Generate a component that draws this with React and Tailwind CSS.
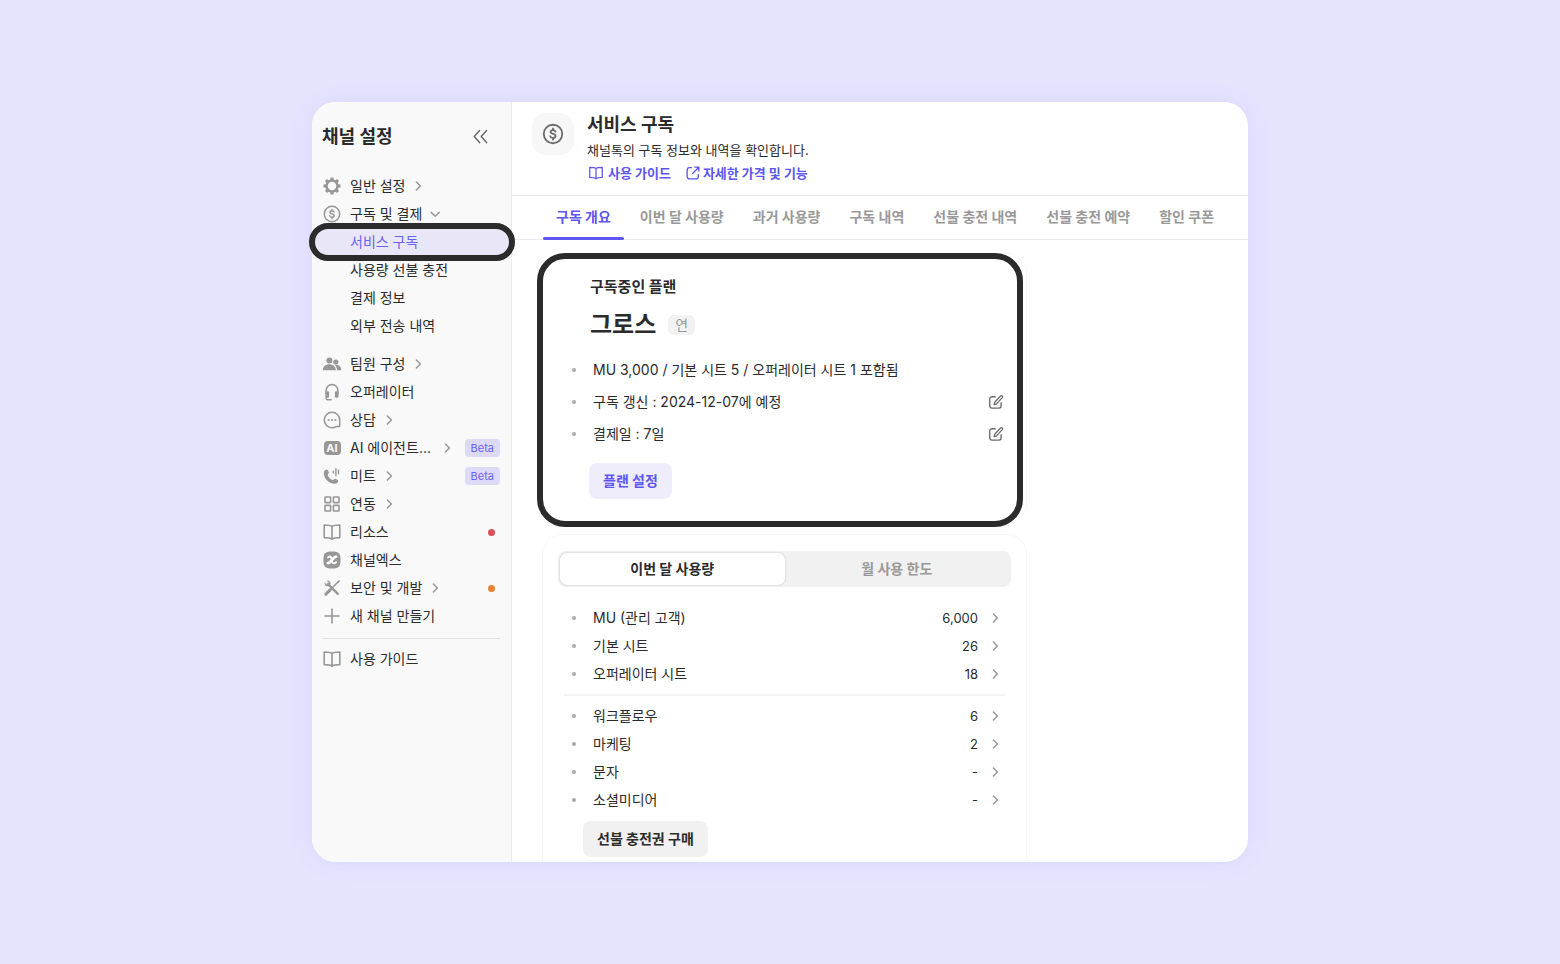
import React from "react";

const GRAY = "#979797";

function Svg({ size = 20, children, className = "shrink-0" }) {
  return (
    <svg width={size} height={size} viewBox="0 0 20 20" fill="none" className={className} aria-hidden="true">
      {children}
    </svg>
  );
}

function Gear() {
  return (
    <Svg>
      <circle cx="10" cy="10" r="5.5" stroke={GRAY} strokeWidth="2.4" />
      {[0, 45, 90, 135, 180, 225, 270, 315].map((a) => (
        <path key={a} d="M8.2 4.2 8.6 1.5h2.8l.4 2.7z" fill={GRAY} transform={`rotate(${a} 10 10)`} />
      ))}
    </Svg>
  );
}

function Dollar({ color = GRAY, size = 20, width = 1.5 }) {
  return (
    <Svg size={size}>
      <circle cx="10" cy="10" r="7.7" stroke={color} strokeWidth={width} />
      <path
        d="M12.1 8.1c-.3-.8-1-1.3-2.1-1.3-1.2 0-2 .6-2 1.5 0 2.2 4.2 1.1 4.2 3.4 0 1-.9 1.6-2.2 1.6s-2-.6-2.3-1.5M10 5.4v1.4M10 13.3v1.4"
        stroke={color}
        strokeWidth={width}
        strokeLinecap="round"
      />
    </Svg>
  );
}

function People() {
  return (
    <Svg>
      <circle cx="7.4" cy="6.4" r="3" fill={GRAY} />
      <path d="M.8 16.2c0-3.8 2.8-6 6.500-6s6.500 2.200 6.500 6z" fill={GRAY} />
      <circle cx="13.8" cy="8" r="2.6" fill={GRAY} />
      <path d="M15 16.2c0-2-.7-3.700-2-5 3.300-.6 6.400 1.200 6.400 5z" fill={GRAY} />
    </Svg>
  );
}

function Headset() {
  return (
    <Svg>
      <path d="M4.1 12V8.5a5.9 5.9 0 0 1 11.8 0V12" stroke={GRAY} strokeWidth="1.5" />
      <rect x="3.5" y="9.2" width="3.6" height="6.6" rx="1.2" fill={GRAY} />
      <rect x="12.9" y="9.2" width="3.6" height="6.6" rx="1.2" fill={GRAY} />
      <path d="M4.2 13.5v2.7c0 .9.6 1.5 1.5 1.5h3.6" stroke={GRAY} strokeWidth="1.4" strokeLinecap="round" />
    </Svg>
  );
}

function Chat() {
  return (
    <Svg>
      <path
        d="M10 2.3a7.7 7.7 0 1 0 4 14.3h3c.4 0 .7-.3.7-.7v-5.9A7.7 7.7 0 0 0 10 2.3z"
        stroke={GRAY}
        strokeWidth="1.5"
        strokeLinejoin="round"
      />
      <circle cx="6.6" cy="10" r="1.1" fill={GRAY} />
      <circle cx="10" cy="10" r="1.1" fill={GRAY} />
      <circle cx="13.4" cy="10" r="1.1" fill={GRAY} />
    </Svg>
  );
}

function AiBadge() {
  return (
    <span className="flex w-5 shrink-0 justify-center" aria-hidden="true">
      <span className="flex h-[14px] w-[17px] items-center justify-center rounded-[4px] bg-[#979797] text-[11px] leading-[14px] font-bold text-[#f9f9f9]">
        AI
      </span>
    </span>
  );
}

function Phone() {
  return (
    <Svg>
      <path
        d="M2.400 5C3 4 4 3.300 4.800 3.400c.8.100 2.100 2.300 2.200 3.100.1.900-1.400 1.600-1.300 2.400.3 1.900 3.200 4.800 5.100 5.100.8.100 1.500-1.400 2.400-1.300.8.100 3 1.400 3.100 2.200.1.800-.6 1.800-1.600 2.400C8.600 20.200-.6 11 2.400 5z"
        fill={GRAY}
      />
      <path d="M11.300 5.100v2M13.900 2.600v7M16.500 4.100v3.600" stroke={GRAY} strokeWidth="1.400" strokeLinecap="round" />
    </Svg>
  );
}

function Grid() {
  return (
    <Svg>
      {[[3, 3], [11.4, 3], [3, 11.4], [11.4, 11.4]].map(([x, y]) => (
        <rect key={`${x}-${y}`} x={x} y={y} width="5.6" height="5.6" rx="0.6" stroke={GRAY} strokeWidth="1.6" />
      ))}
    </Svg>
  );
}

function Book({ color = GRAY, size = 20, width = 1.6 }) {
  return (
    <Svg size={size}>
      <path
        d="M10 4.4C8.8 3.3 7.5 3 2.2 3v12.6c5 0 6.600.3 7.800 1.700 1.200-1.400 2.800-1.700 7.800-1.700V3c-5.300 0-6.600.3-7.800 1.400zM10 4.400v12.900"
        stroke={color}
        strokeWidth={width}
        strokeLinejoin="round"
      />
    </Svg>
  );
}

function ChannelX() {
  return (
    <Svg>
      <rect x="1.5" y="1.5" width="17" height="17" rx="6" fill={GRAY} />
      <path d="M14.200 6.700C11.200 6.500 9 13.200 5.800 13.200" stroke="#f9f9f9" strokeWidth="2.800" strokeLinecap="round" />
      <path
        d="M6 7.500c1.300-1.500 2.900-1.300 3.300.3l1 4.300c.4 1.600 2.300 1.600 3.900.2"
        stroke="#f9f9f9"
        strokeWidth="1.900"
        strokeLinecap="round"
      />
    </Svg>
  );
}

function Tools() {
  return (
    <Svg>
      <path d="M6 6l9.8 9.8" stroke={GRAY} strokeWidth="2.4" strokeLinecap="round" />
      <path d="M2.6 4.4 4.6 6.4 6.3 6 6.6 4.3 4.7 2.5C7.2 1.9 9 3.8 8.5 6.3L6.8 8.2C4.3 8.9 2 6.9 2.6 4.4z" fill={GRAY} />
      <path d="M16.8 3.2 11 9" stroke={GRAY} strokeWidth="1.5" strokeLinecap="round" />
      <path d="M15 3.4 17.3 2.3 17.9 2.9 16.7 5.1z" fill={GRAY} />
      <path d="M8.4 11.6 3.8 16.3" stroke={GRAY} strokeWidth="3" strokeLinecap="round" />
    </Svg>
  );
}

function Plus() {
  return (
    <Svg>
      <path d="M10 3v14M3 10h14" stroke={GRAY} strokeWidth="1.6" strokeLinecap="round" />
    </Svg>
  );
}

function Chevron({ down = false }) {
  return (
    <svg width="14" height="14" viewBox="0 0 14 14" fill="none" className="shrink-0" aria-hidden="true">
      <path
        d={down ? "M3.2 5.400 7.200 9.200l4-3.800" : "M5.400 3 9.400 7l-4 4"}
        stroke={GRAY}
        strokeWidth="1.5"
        strokeLinecap="round"
        strokeLinejoin="round"
      />
    </svg>
  );
}

function Collapse() {
  return (
    <Svg>
      <path d="M9.6 3.6 4.2 9.6l5.4 6M16.6 3.6l-5.4 6 5.4 6" stroke="#6b6b6b" strokeWidth="1.5" strokeLinecap="round" strokeLinejoin="round" />
    </Svg>
  );
}

function External() {
  return (
    <Svg size={16}>
      <path
        d="M8 3.3H5.5a2.8 2.8 0 0 0-2.8 2.8v8.400a2.800 2.800 0 0 0 2.800 2.800h8.400a2.800 2.800 0 0 0 2.800-2.800V12M9.500 10.500l7.300-7.300M12.400 2.700h4.900v4.900"
        stroke="#5e56f0"
        strokeWidth="1.7"
        strokeLinecap="round"
        strokeLinejoin="round"
      />
    </Svg>
  );
}

function Edit() {
  return (
    <Svg size={16}>
      <path
        d="M9 3.4H5a2.8 2.8 0 0 0-2.8 2.8v8.600A2.800 2.800 0 0 0 5 17.600h8.600a2.800 2.800 0 0 0 2.800-2.800v-4"
        stroke="#6b6b6b"
        strokeWidth="1.7"
        strokeLinecap="round"
      />
      <path
        d="M15.7 2.5a1.5 1.5 0 0 1 2.2 2.1l-7 7.500c-.8.8-1.900 1.200-3.200 1.100 0-1.300.2-2.300 1-3.200z"
        stroke="#6b6b6b"
        strokeWidth="1.6"
        strokeLinejoin="round"
      />
    </Svg>
  );
}

const subItems = ["서비스 구독", "사용량 선불 충전", "결제 정보", "외부 전송 내역"];

const menu = [
  { label: "팀원 구성", icon: <People />, more: true },
  { label: "오퍼레이터", icon: <Headset /> },
  { label: "상담", icon: <Chat />, more: true },
  { label: "AI 에이전트...", icon: <AiBadge />, more: true, beta: true, wide: true },
  { label: "미트", icon: <Phone />, more: true, beta: true },
  { label: "연동", icon: <Grid />, more: true },
  { label: "리소스", icon: <Book />, dot: "bg-[#dc5158]" },
  { label: "채널엑스", icon: <ChannelX /> },
  { label: "보안 및 개발", icon: <Tools />, more: true, dot: "bg-[#e58432]" },
  { label: "새 채널 만들기", icon: <Plus /> },
];

function MenuItem({ label, icon, more, open, beta, dot, wide }) {
  return (
    <li>
      <a href="#" className="flex h-7 items-center">
        {icon}
        <span className={wide ? "ml-2 w-[84px] whitespace-nowrap" : "ml-2 whitespace-nowrap"}>{label}</span>
        {more && (
          <span className="ml-[6px]">
            <Chevron down={open} />
          </span>
        )}
        {beta && (
          <span className="ml-auto rounded-[4px] bg-[#dddaf7] px-[6px] text-[11px] leading-[18px] text-[#6a62ee]">Beta</span>
        )}
        {dot && <span className={`mr-[5px] ml-auto size-[7px] rounded-full ${dot}`} />}
      </a>
    </li>
  );
}

function Sidebar() {
  return (
    <aside className="w-[200px] shrink-0 rounded-l-[24px] border-r border-[#ebebeb] bg-[#f9f9f9] pr-[11px] pl-[10px]">
      <div className="flex h-[70px] items-center justify-between pr-[10px]">
        <h2 className="text-[18px] leading-6 font-bold">채널 설정</h2>
        <button type="button" aria-label="메뉴 접기" className="flex">
          <Collapse />
        </button>
      </div>
      <nav className="text-[14px] leading-5">
        <ul>
          <MenuItem label="일반 설정" icon={<Gear />} more />
          <MenuItem label="구독 및 결제" icon={<Dollar />} more open />
          {subItems.map((label, i) =>
            i === 0 ? (
              <li key={label} className="relative">
                <span className="absolute -top-[5px] -right-[15px] -bottom-[5px] -left-[13px] z-10 rounded-full border-[6px] border-[#2b2b2b] bg-[#e9e7f7]" />
                <a href="#" aria-current="page" className="relative z-20 flex h-7 items-center pl-7 text-[#6a62f0]">
                  {label}
                </a>
              </li>
            ) : (
              <li key={label}>
                <a href="#" className="flex h-7 items-center pl-7">{label}</a>
              </li>
            )
          )}
        </ul>
        <ul className="mt-[10px]">
          {menu.map((m) => (
            <MenuItem key={m.label} {...m} />
          ))}
        </ul>
        <hr className="mt-2 mb-[6px] border-[#e2e2e2]" />
        <ul>
          <MenuItem label="사용 가이드" icon={<Book />} />
        </ul>
      </nav>
    </aside>
  );
}

const tabs = ["구독 개요", "이번 달 사용량", "과거 사용량", "구독 내역", "선불 충전 내역", "선불 충전 예약", "할인 쿠폰"];

function Bullet() {
  return <span className="mr-[17px] size-1 shrink-0 rounded-full bg-[#a8a8a8]" />;
}

function UsageList({ rows }) {
  return (
    <ul>
      {rows.map(([name, value]) => (
        <li key={name}>
          <a href="#" className="flex h-7 items-center pr-[24px] pl-[29px]">
            <Bullet />
            <span>{name}</span>
            <span className="mr-[10px] ml-auto text-[13px]">{value}</span>
            <Chevron />
          </a>
        </li>
      ))}
    </ul>
  );
}

function PlanCard() {
  const details = [
    ["MU 3,000 / 기본 시트 5 / 오퍼레이터 시트 1 포함됨", false],
    ["구독 갱신 : 2024-12-07에 예정", true],
    ["결제일 : 7일", true],
  ];
  return (
    <section className="relative rounded-[20px] border border-[#f7f7f7] pt-[23px] pb-[23px]">
      <span className="pointer-events-none absolute -top-px right-[3px] -bottom-[5px] -left-[6px] rounded-[28px] border-[6px] border-[#2b2b2b]" />
      <h2 className="pl-[47px] text-[15px] leading-5 font-bold">구독중인 플랜</h2>
      <div className="mt-3 flex h-8 items-center pl-[47px]">
        <strong className="text-[24px] leading-8 font-bold">그로스</strong>
        <span className="ml-3 rounded-[6px] bg-[#f2f2f2] px-[7px] text-[14px] leading-5 text-[#999]">연</span>
      </div>
      <ul className="mt-[13px]">
        {details.map(([text, editable]) => (
          <li key={text} className="flex h-8 items-center pr-[22px] pl-[29px]">
            <Bullet />
            <span>{text}</span>
            {editable && (
              <button type="button" aria-label={`${text} 수정`} className="ml-auto">
                <Edit />
              </button>
            )}
          </li>
        ))}
      </ul>
      <button type="button" className="mt-[13px] ml-[46px] block h-9 rounded-[8px] bg-[#efedfc] px-[14px] font-bold text-[#5e56f0]">
        플랜 설정
      </button>
    </section>
  );
}

function UsageCard() {
  return (
    <section className="mt-[11px] flex-1 rounded-t-[20px] border border-b-0 border-[#f7f7f7] pt-4 pb-[5px]">
      <div className="mx-[15px] flex h-9 rounded-[8px] bg-[#f1f1f1] p-[2px] font-bold">
        <button type="button" aria-pressed="true" className="flex-1 rounded-[7px] bg-white shadow-[0_0_2px_rgba(0,0,0,0.22)]">
          이번 달 사용량
        </button>
        <button type="button" aria-pressed="false" className="flex-1 text-[#999]">월 사용 한도</button>
      </div>
      <div className="mt-[17px]">
        <UsageList rows={[["MU (관리 고객)", "6,000"], ["기본 시트", "26"], ["오퍼레이터 시트", "18"]]} />
        <hr className="mx-[21px] my-[6px] border-t-2 border-[#f4f4f4]" />
        <UsageList rows={[["워크플로우", "6"], ["마케팅", "2"], ["문자", "-"], ["소셜미디어", "-"]]} />
      </div>
      <button type="button" className="mt-[7px] ml-[40px] block h-9 rounded-[8px] bg-[#f1f1f1] px-[14px] font-bold">
        선불 충전권 구매
      </button>
    </section>
  );
}

export default function App() {
  return (
    <div className="flex min-h-screen justify-center bg-[#e5e4ff] py-[102px] font-['Inter','Noto_Sans_CJK_KR',sans-serif] text-[14px] leading-5 text-[#2b2b2b]">
      <div className="flex w-3/5 min-w-[936px] rounded-[24px] bg-white shadow-[0_0_24px_rgba(94,86,220,0.08)]">
        <Sidebar />
        <main className="flex min-w-0 flex-1 flex-col">
          <header className="flex gap-[13px] border-b border-[#ebebeb] pt-[11px] pb-[13px] pl-5">
            <span className="flex size-[42px] items-center justify-center rounded-[14px] bg-[#f7f7f7]">
              <Dollar color="#6b6b6b" size={24} width={1.5} />
            </span>
            <div>
              <h1 className="text-[18px] leading-6 font-bold">서비스 구독</h1>
              <p className="mt-1 text-[13px] leading-[18px]">채널톡의 구독 정보와 내역을 확인합니다.</p>
              <div className="mt-[5px] ml-px flex gap-[14px] text-[13px] leading-[18px] font-bold text-[#5e56f0]">
                <a href="#" className="flex items-center gap-1">
                  <Book color="#5e56f0" size={16} width={1.6} />
                  사용 가이드
                </a>
                <a href="#" className="flex items-center gap-[2px]">
                  <External />
                  자세한 가격 및 기능
                </a>
              </div>
            </div>
          </header>
          <nav className="flex gap-[3px] border-b border-[#ebebeb] pl-[31px] font-bold">
            {tabs.map((t, i) => (
              <a
                key={t}
                href="#"
                className={`relative -mb-px flex h-11 items-center px-[13px] pb-[3px] whitespace-nowrap ${i === 0 ? "text-[#5e56f0]" : "text-[#999]"}`}
              >
                {t}
                {i === 0 && <span className="absolute inset-x-0 bottom-0 h-[3px] rounded-full bg-[#5e56f0]" />}
              </a>
            ))}
          </nav>
          <div className="ml-[30px] flex w-full max-w-[485px] flex-1 flex-col pt-[13px]">
            <PlanCard />
            <UsageCard />
          </div>
        </main>
      </div>
    </div>
  );
}
